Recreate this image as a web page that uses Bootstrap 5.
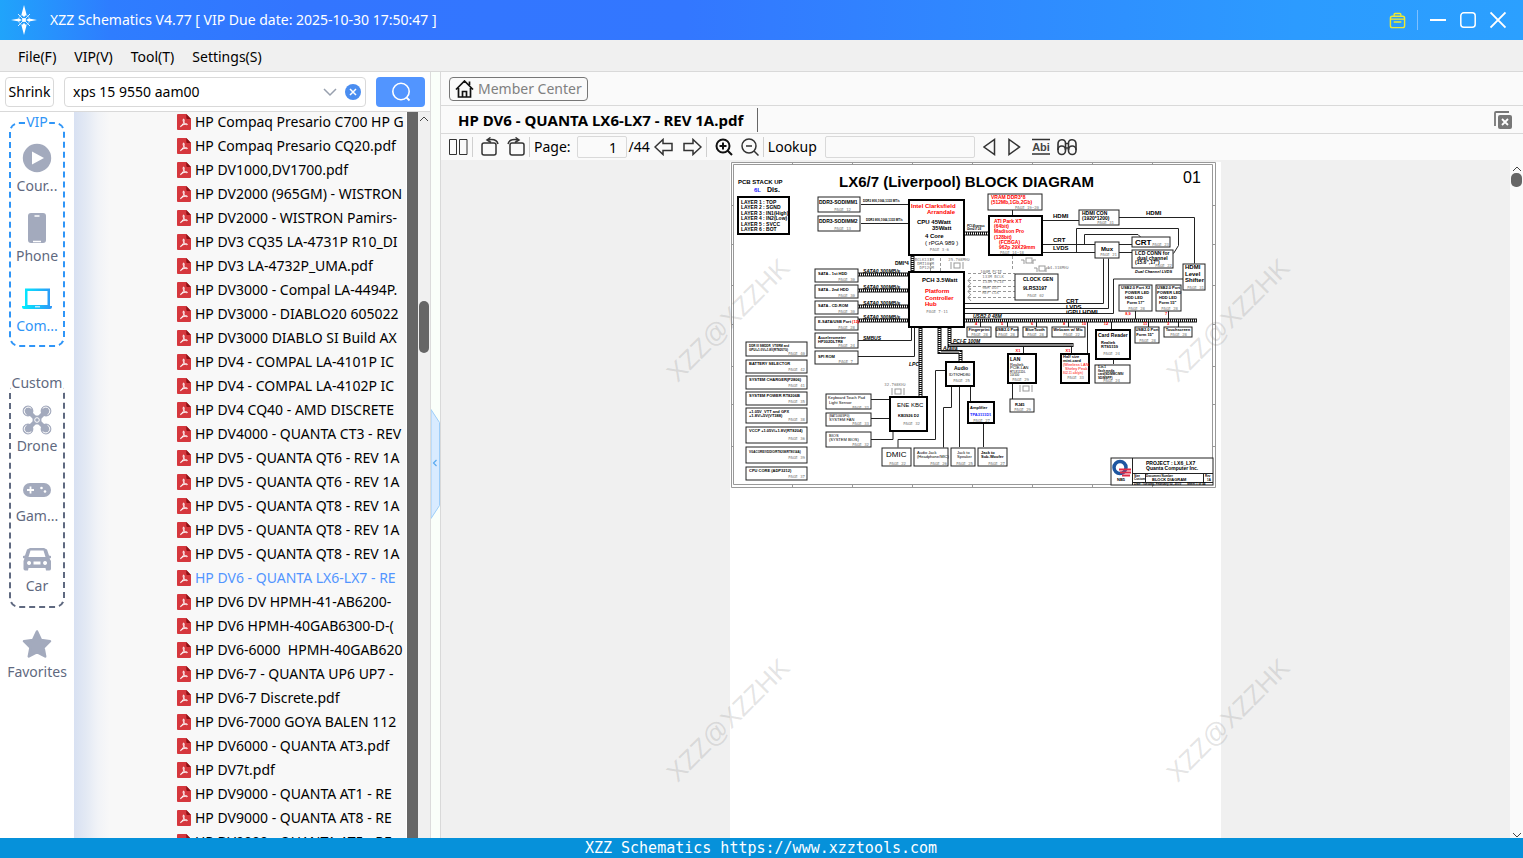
<!DOCTYPE html>
<html lang="en">
<head>
<meta charset="utf-8">
<meta name="viewport" content="width=device-width, initial-scale=1">
<title>XZZ Schematics V4.77</title>
<link href="https://cdn.jsdelivr.net/npm/bootstrap@5.3.0/dist/css/bootstrap.min.css" rel="stylesheet">
<script src="https://cdn.jsdelivr.net/npm/bootstrap@5.3.0/dist/js/bootstrap.bundle.min.js" defer></script>
<style>
  body { font-family: "Noto Sans", "Noto Sans CJK SC", sans-serif; font-size: 14px; line-height: 20px; color: #000; background: #fafafa; }
  button, input { font-family: inherit; font-size: inherit; line-height: inherit; color: inherit; }
  svg { display: block; flex: none; }
  .bare { border: 0; padding: 0; background: none; }
  .title-bar { height: 40px; color: #fff; background: linear-gradient(90deg, #20a4fb 0, #2e7dff 110px, #3375ff 300px, #3377ff 45%, #2c9bff 85%, #2ba0ff 100%); padding: 0 17px 0 10px; }
  .title-sep { width: 1px; height: 20px; background: #7fc0ff; margin: 0 12px 0 11px; }
  .win-set { gap: 14px; }
  .menu-bar { height: 32px; background: #f0f0f0; border-bottom: 1px solid #d9d9d9; padding: 2px 0 0 18px; gap: 18px; }
  .menu-bar a { color: #000; text-decoration: none; }
  .left-pane { width: 431px; border-right: 1px solid #dcdcdc; background: #fff; }
  .search-row { height: 40px; border-bottom: 1px solid #d9d9d9; padding: 1px 5px 0; background: #fff; }
  .field { border: 1px solid #d9d9d9; border-radius: 4px; background: #fff; height: 30px; }
  .shrink-btn { width: 49px; padding: 0; }
  .search-box { width: 302px; margin-left: 10px; margin-right: 10px; padding: 0 4px 0 8px; }
  .search-box input, .tool-bar input { outline: 0; min-width: 0; }
  .go-btn { width: 49px; height: 30px; background: #5295ff; border-radius: 4px; }
  .side-nav { width: 74px; background: #fff; padding: 10px 9px 0; color: #5f6980; }
  .group-box { position: relative; border: 2px dashed #5f6980; border-radius: 10px; height: 225px; }
  .group-box.vip { border-color: #2f95f7; margin-bottom: 36px; }
  .group-name { position: absolute; top: -12px; left: 50%; transform: translateX(-50%); background: #fff; padding: 0 1px; }
  .vip .group-name { color: #2f95f7; }
  .side-item { display: flex; flex-direction: column; align-items: center; height: 70px; width: 100%; padding-top: 19px; color: #5f6980; text-decoration: none; white-space: nowrap; }
  .side-item svg { width: 32px; height: 32px; }
  .vip .side-item { padding-top: 18px; gap: 2px; }
  .side-item.on { color: #2f95f7; }
  .fav-item { padding-top: 20px; height: 76px; gap: 2px; }
  .tree { min-width: 0; background: linear-gradient(90deg, #d8e1f2 0, #e3e9f4 12px, #f1f3f7 24px, #f8f8f8 36px); padding-left: 103px; }
  .tree ul { margin: -2px 0 0; }
  .tree li { height: 24px; }
  .tree a { display: flex; align-items: center; gap: 4px; height: 24px; color: #000; text-decoration: none; white-space: pre; }
  .tree a.on { color: #5295ff; }
  .dark-rail { width: 11px; background: #666; margin-left: 1px; }
  .track { width: 12px; background: #f0f0f0; position: relative; }
  .thumb { position: absolute; left: 1px; top: 189px; width: 10px; height: 52px; border-radius: 5px; background: #666; }
  .splitter { width: 10px; background: #fafffa; border-right: 1px solid #d9d9d9; padding-top: 18px; }
  .bar-row { border-bottom: 1px solid #d9d9d9; background: #fafafa; }
  .member-row { height: 34px; padding-left: 8px; }
  .member-btn { height: 24px; border: 1px solid #777; border-radius: 4px; background: #fafafa; color: #808080; padding: 0 5px; gap: 4px; }
  .tab-row { height: 28px; padding: 0 11px 0 17px; }
  .doc-tab { font-size: 15px; font-weight: 700; color: #000; text-decoration: none; border-right: 1px solid #666; height: 24px; line-height: 24px; padding-right: 14px; }
  .tool-bar { height: 26px; padding-left: 8px; background: #fafafa; }
  .tool-bar .field { height: 22px; background: #fafafa; border-radius: 2px; padding: 0 6px; }
  .tool-bar .page-no { width: 50px; text-align: right; margin: 0 2px 0 6px; padding-right: 5px; }
  .lookup { width: 150px; margin: 0 8px; }
  .find-set { gap: 12px; }
  .extra-set { gap: 6px; margin-left: 10px; }
  .bar-sep { width: 1px; height: 20px; background: #d0d0d0; }
  .viewer { background: #f0f0f0; min-width: 0; padding-top: 2px; }
  .sheet { width: 491px; background: #fff; }
  .wmark { position: absolute; font: 26px/30px "Liberation Sans", Arial, sans-serif; color: rgba(120,120,120,.2); transform: translate(-50%,-50%) rotate(-45deg); pointer-events: none; }
  .view-track { width: 13px; background: #fafafa; padding-top: 6px; }
  .view-thumb { width: 11px; height: 14px; border-radius: 5px; background: #666; margin-top: 1px; }
  .status { height: 20px; background: #0691da; color: #fff; font: 15px/20px "DejaVu Sans Mono", "Liberation Mono", monospace; padding-right: 1px; }

  /* block diagram */
  .dia { font-family: "Liberation Sans", Arial, sans-serif; font-size: 5px; }
  .dia rect { fill: #fff; stroke: #222; stroke-width: 1; }
  .dia .hv { stroke: #000; stroke-width: 2; }
  .dia .ln { fill: none; stroke: #222; stroke-width: 1; }
  .dia .lt { fill: none; stroke: #999; stroke-width: 1; }
  .dia .ds { stroke-dasharray: 3 2; }
  .dia .bus { fill: none; stroke: #111; stroke-width: 4; }
  .dia .hat { fill: none; stroke: #fff; stroke-width: 2; stroke-dasharray: 1 1; }
  .dia .b { font-weight: 700; }
  .dia .r { fill: #f00; }
  .dia .u { fill: #22f; }
  .dia .s4 { font-size: 4px; }
  .dia .s6 { font-size: 6px; }
  .dia .s7 { font-size: 7px; }
  .dia .s8 { font-size: 8px; }
  .dia .s3 { font-size: 3px; }
  .dia .it { font-style: italic; }
  .dia .pg { font: 4px "DejaVu Sans Mono", monospace; fill: #777; text-anchor: end; }
  .dia .mid { text-anchor: middle; }
</style>
</head>
<body>
<svg width="0" height="0" class="position-absolute" aria-hidden="true">
  <symbol id="pdf" viewBox="0 0 15 16" preserveAspectRatio="none"><path d="M1 0h9l5 5v10a1 1 0 0 1-1 1H1a1 1 0 0 1-1-1V1a1 1 0 0 1 1-1z" fill="#d5373d"/><path d="M10 0l5 5h-4a1 1 0 0 1-1-1z" fill="#8e1217"/><path d="M7 5c1 0 .8 2 .3 3.600L4.500 12.500c-1 .6-1-.5.2-1.200L10 9.800c1.500 0 1.500 1 .3.900C8.500 10.300 6.500 8 6.500 6z" fill="none" stroke="#fff" stroke-width="1"/></symbol>
  <symbol id="up" viewBox="0 0 10 6"><path d="M1 5l4-4 4 4" fill="none" stroke="#444" stroke-width="1"/></symbol>
  <symbol id="down" viewBox="0 0 10 6"><path d="M1 1l4 4 4-4" fill="none" stroke="#444" stroke-width="1"/></symbol>
</svg>
<div class="d-flex flex-column vh-100 overflow-hidden">

  <header class="title-bar d-flex align-items-center flex-shrink-0">
    <svg width="28" height="30" viewBox="0 0 28 30"><circle cx="14" cy="15" r="5.500" fill="none" stroke="#9bd5ff"/><path d="M14 0l2.500 9.500L14 12l-2.500-2.500zM14 30l2.500-9.500L14 18l-2.500 2.500zM1 15l8-1.500 3 1.500-3 1.500zM27 15l-8-1.500-3 1.500 3 1.500z" fill="#fff"/><path d="M8 9l5 5M20 9l-5 5M8 21l5-5M20 21l-5-5" stroke="#d5edff"/><circle cx="14" cy="15" r="2" fill="#fff"/></svg>
    <span class="ms-2 ps-1 me-auto">XZZ Schematics V4.77 [ VIP Due date: 2025-10-30 17:50:47 ]</span>
    <button class="bare" aria-label="Toolbox"><svg width="17" height="17" viewBox="0 0 18 18" fill="none" stroke="#f2ea2e" stroke-width="1.500"><rect x="1.500" y="4.500" width="15" height="12" rx="2"/><path d="M5.500 4V2.500a1 1 0 0 1 1-1h5a1 1 0 0 1 1 1V4M2 7.500h14M5 10.500h8"/></svg></button>
    <span class="title-sep"></span>
    <span class="d-flex win-set">
      <button class="bare" aria-label="Minimize"><svg width="16" height="18" viewBox="0 0 16 18"><path d="M0 9h16" stroke="#fff" stroke-width="2"/></svg></button>
      <button class="bare" aria-label="Maximize"><svg width="16" height="18" viewBox="0 0 16 18"><rect x=".8" y="1.800" width="14.400" height="14.400" rx="3" fill="none" stroke="#fff" stroke-width="1.500"/></svg></button>
      <button class="bare" aria-label="Close"><svg width="16" height="18" viewBox="0 0 16 18"><path d="M.5 1.500l15 15M15.500 1.500l-15 15" stroke="#fff" stroke-width="1.800"/></svg></button>
    </span>
  </header>

  <nav class="menu-bar d-flex align-items-center flex-shrink-0">
    <a href="#">File(F)</a><a href="#">VIP(V)</a><a href="#">Tool(T)</a><a href="#">Settings(S)</a>
  </nav>

  <main class="d-flex flex-grow-1 overflow-hidden">
    <section class="left-pane d-flex flex-column flex-shrink-0">
      <div class="search-row d-flex align-items-center flex-shrink-0">
        <button class="field shrink-btn">Shrink</button>
        <div class="field search-box d-flex align-items-center">
          <input class="bare flex-grow-1" aria-label="Search" value="xps 15 9550 aam00">
          <svg width="14" height="10" viewBox="0 0 14 10" class="me-2"><path d="M1 2l6 6 6-6" fill="none" stroke="#98a0ae" stroke-width="1.500"/></svg>
          <button class="bare" aria-label="Clear"><svg width="16" height="16" viewBox="0 0 16 16"><circle cx="8" cy="8" r="8" fill="#4a8df0"/><path d="M5 5l6 6M11 5l-6 6" stroke="#fff" stroke-width="1.500"/></svg></button>
        </div>
        <button class="bare go-btn d-flex align-items-center justify-content-center" aria-label="Find"><svg width="20" height="20" viewBox="0 0 20 20"><circle cx="10" cy="9.500" r="8.200" fill="none" stroke="#fff" stroke-width="1.600"/><path d="M15.500 15.500l3 3" stroke="#fff" stroke-width="1.800"/></svg></button>
      </div>

      <div class="d-flex flex-grow-1 overflow-hidden">
        <nav class="side-nav flex-shrink-0">
          <div class="group-box vip"><span class="group-name">VIP</span>
            <a class="side-item" href="#"><svg viewBox="0 0 32 32"><circle cx="16" cy="16" r="14.200" fill="#a3aabd"/><path d="M11 9.500l12 6.500-12 6.500z" fill="#fff"/></svg>Cour...</a>
            <a class="side-item" href="#"><svg viewBox="0 0 32 32"><rect x="7" y="1" width="18" height="30" rx="3" fill="#a3aabd"/><path d="M13.500 4h5M12 29.500h8" stroke="#fff" stroke-width="1.500"/></svg>Phone</a>
            <a class="side-item on" href="#"><svg viewBox="0 0 32 32"><defs><linearGradient id="lg"><stop stop-color="#00f0ff"/><stop offset="1" stop-color="#2f95f7"/></linearGradient></defs><path fill-rule="evenodd" fill="url(#lg)" d="M4 6.500h25V24h2v1a2 2 0 0 1-2 2H3a2 2 0 0 1-2-2v-1h3zM6.500 9v14h20V9z"/><path d="M14 24.800h5" stroke="#fff"/></svg>Com...</a>
          </div>
          <div class="group-box"><span class="group-name">Custom</span>
            <a class="side-item" href="#"><svg viewBox="0 0 32 32"><g fill="#a3aabd"><circle cx="7" cy="7" r="5"/><circle cx="25" cy="7" r="5"/><circle cx="7" cy="25" r="5"/><circle cx="25" cy="25" r="5"/></g><path d="M7 7l18 18M25 7L7 25" stroke="#a3aabd" stroke-width="4.500"/><g fill="none" stroke="#a3aabd" stroke-width="1.200"><circle cx="7" cy="7" r="4.800"/><circle cx="25" cy="7" r="4.800"/><circle cx="7" cy="25" r="4.800"/><circle cx="25" cy="25" r="4.800"/></g><g fill="none" stroke="#fff" stroke-width="1"><path d="M10.300 4.500a4 4 0 1 0-4.800 6.200M21.700 4.500a4 4 0 1 1 4.800 6.200M10.300 27.500a4 4 0 1 1-4.800-6.200M21.700 27.500a4 4 0 1 0 4.800-6.200"/></g><circle cx="16" cy="16" r="4.500" fill="#a3aabd"/><circle cx="16" cy="16" r="2.300" fill="none" stroke="#fff"/></svg>Drone</a>
            <a class="side-item" href="#"><svg viewBox="0 0 32 32"><rect x="2" y="9" width="28" height="14" rx="7" fill="#a3aabd"/><path d="M6 16h7M9.500 12.500v7" stroke="#fff" stroke-width="1.800"/><circle cx="20.500" cy="14" r="1.300" fill="#fff"/><circle cx="24" cy="17.500" r="1.300" fill="#fff"/></svg>Gam...</a>
            <a class="side-item" href="#"><svg viewBox="0 0 32 32"><path fill-rule="evenodd" fill="#a3aabd" d="M9 4h14l3 1.500 2 6 2 .5v2l-1.500.5L30 17v8a2 2 0 0 1-2 1.500h-3L24.500 24h-17L7 26.500H4A2 2 0 0 1 2.500 25v-8l1-2.500L2 14v-2l2-.5 2-6zM9.500 6.500L7.500 13h17l-2-6.500zM8 17a2 2 0 1 0 .1 0zM24 17a2 2 0 1 0 .1 0zM12.500 17.500v3h7v-3z"/></svg>Car</a>
          </div>
          <a class="side-item fav-item" href="#"><svg viewBox="0 0 32 32"><path d="M16 3.500l4 8.500 9 1.200-6.500 6.300 1.700 9L16 24.200 7.800 28.500l1.700-9L3 13.200 12 12z" fill="#a3aabd" stroke="#a3aabd" stroke-width="2.500" stroke-linejoin="round"/></svg>Favorites</a>
        </nav>

        <div class="tree flex-grow-1 overflow-hidden">
          <ul class="list-unstyled">
            <li><a href="#"><svg width="14" height="16"><use href="#pdf"/></svg>HP Compaq Presario C700 HP G</a></li>
            <li><a href="#"><svg width="14" height="16"><use href="#pdf"/></svg>HP Compaq Presario CQ20.pdf</a></li>
            <li><a href="#"><svg width="14" height="16"><use href="#pdf"/></svg>HP DV1000,DV1700.pdf</a></li>
            <li><a href="#"><svg width="14" height="16"><use href="#pdf"/></svg>HP DV2000 (965GM) - WISTRON</a></li>
            <li><a href="#"><svg width="14" height="16"><use href="#pdf"/></svg>HP DV2000 - WISTRON Pamirs-</a></li>
            <li><a href="#"><svg width="14" height="16"><use href="#pdf"/></svg>HP DV3 CQ35 LA-4731P R10_DI</a></li>
            <li><a href="#"><svg width="14" height="16"><use href="#pdf"/></svg>HP DV3 LA-4732P_UMA.pdf</a></li>
            <li><a href="#"><svg width="14" height="16"><use href="#pdf"/></svg>HP DV3000 - Compal LA-4494P.</a></li>
            <li><a href="#"><svg width="14" height="16"><use href="#pdf"/></svg>HP DV3000 - DIABLO20 605022</a></li>
            <li><a href="#"><svg width="14" height="16"><use href="#pdf"/></svg>HP DV3000 DIABLO SI Build AX</a></li>
            <li><a href="#"><svg width="14" height="16"><use href="#pdf"/></svg>HP DV4 - COMPAL LA-4101P IC</a></li>
            <li><a href="#"><svg width="14" height="16"><use href="#pdf"/></svg>HP DV4 - COMPAL LA-4102P IC</a></li>
            <li><a href="#"><svg width="14" height="16"><use href="#pdf"/></svg>HP DV4 CQ40 - AMD DISCRETE</a></li>
            <li><a href="#"><svg width="14" height="16"><use href="#pdf"/></svg>HP DV4000 - QUANTA CT3 - REV</a></li>
            <li><a href="#"><svg width="14" height="16"><use href="#pdf"/></svg>HP DV5 - QUANTA QT6 - REV 1A</a></li>
            <li><a href="#"><svg width="14" height="16"><use href="#pdf"/></svg>HP DV5 - QUANTA QT6 - REV 1A</a></li>
            <li><a href="#"><svg width="14" height="16"><use href="#pdf"/></svg>HP DV5 - QUANTA QT8 - REV 1A</a></li>
            <li><a href="#"><svg width="14" height="16"><use href="#pdf"/></svg>HP DV5 - QUANTA QT8 - REV 1A</a></li>
            <li><a href="#"><svg width="14" height="16"><use href="#pdf"/></svg>HP DV5 - QUANTA QT8 - REV 1A</a></li>
            <li><a href="#" class="on"><svg width="14" height="16"><use href="#pdf"/></svg>HP DV6 - QUANTA LX6-LX7 - RE</a></li>
            <li><a href="#"><svg width="14" height="16"><use href="#pdf"/></svg>HP DV6 DV HPMH-41-AB6200-</a></li>
            <li><a href="#"><svg width="14" height="16"><use href="#pdf"/></svg>HP DV6 HPMH-40GAB6300-D-(</a></li>
            <li><a href="#"><svg width="14" height="16"><use href="#pdf"/></svg>HP DV6-6000  HPMH-40GAB620</a></li>
            <li><a href="#"><svg width="14" height="16"><use href="#pdf"/></svg>HP DV6-7 - QUANTA UP6 UP7 -</a></li>
            <li><a href="#"><svg width="14" height="16"><use href="#pdf"/></svg>HP DV6-7 Discrete.pdf</a></li>
            <li><a href="#"><svg width="14" height="16"><use href="#pdf"/></svg>HP DV6-7000 GOYA BALEN 112</a></li>
            <li><a href="#"><svg width="14" height="16"><use href="#pdf"/></svg>HP DV6000 - QUANTA AT3.pdf</a></li>
            <li><a href="#"><svg width="14" height="16"><use href="#pdf"/></svg>HP DV7t.pdf</a></li>
            <li><a href="#"><svg width="14" height="16"><use href="#pdf"/></svg>HP DV9000 - QUANTA AT1 - RE</a></li>
            <li><a href="#"><svg width="14" height="16"><use href="#pdf"/></svg>HP DV9000 - QUANTA AT8 - RE</a></li>
            <li><a href="#"><svg width="14" height="16"><use href="#pdf"/></svg>HP DV9000 - QUANTA AT5 - RE</a></li>
          </ul>
        </div>
        <div class="dark-rail flex-shrink-0"></div>
        <div class="track flex-shrink-0"><svg width="10" height="6" class="mx-auto mt-1"><use href="#up"/></svg><div class="thumb"></div></div>
      </div>
    </section>

    <div class="splitter d-flex align-items-center flex-shrink-0">
      <button class="bare" aria-label="Collapse panel"><svg width="9" height="110" viewBox="0 0 9 110"><path d="M0 .5l8.500 13v83L0 109.500z" fill="#d9ebff" stroke="#9dcdf8"/><path d="M5.500 51l-3 3 3 3" fill="none" stroke="#5aaaf0" stroke-width="1.200"/></svg></button>
    </div>

    <section class="d-flex flex-column flex-grow-1 overflow-hidden">
      <div class="bar-row member-row d-flex align-items-center flex-shrink-0">
        <button class="member-btn d-flex align-items-center"><svg width="19" height="18" viewBox="0 0 19 18" fill="none" stroke="#111" stroke-width="1.700"><path d="M1 9.500L9.500 1 18 9.500M3.500 8v9h12V8M7.500 17v-5.500h4V17M14.500 1.500V5"/></svg>Member Center</button>
      </div>
      <div class="bar-row tab-row d-flex align-items-center flex-shrink-0">
        <a class="doc-tab me-auto" href="#">HP DV6 - QUANTA LX6-LX7 - REV 1A.pdf</a>
        <button class="bare" aria-label="Close all"><svg width="18" height="18" viewBox="0 0 18 18"><path d="M1 15V2a1 1 0 0 1 1-1h13" fill="none" stroke="#777" stroke-width="1.800"/><rect x="4" y="4" width="14" height="14" rx="2" fill="#777"/><path d="M8 8l6 6M14 8l-6 6" stroke="#fff" stroke-width="1.800"/></svg></button>
      </div>
      <div class="tool-bar d-flex align-items-center flex-shrink-0">
        <button class="bare" aria-label="Two pages"><svg width="19" height="18" viewBox="0 0 19 18" fill="none" stroke="#333"><path d="M.5 1.500h7v15h-7zM10.500 1.500h7.500v15h-7.500z"/></svg></button>
        <span class="bar-sep ms-1 me-2"></span>
        <button class="bare" aria-label="Rotate left"><svg width="18" height="20" viewBox="0 0 18 20" fill="none" stroke="#333" stroke-width="1.500"><rect x="1" y="6" width="14" height="12" rx="2"/><path d="M17 7C16 3 12 2 7 3M9.500 .5L6 3l4 2.500"/></svg></button>
        <button class="bare ms-2" aria-label="Rotate right"><svg width="18" height="20" viewBox="0 0 18 20" fill="none" stroke="#333" stroke-width="1.500"><rect x="3" y="6" width="14" height="12" rx="2"/><path d="M1 7c1-4 5-5 10-4M8.500 .5L12 3 8 5.500"/></svg></button>
        <span class="bar-sep mx-1"></span>
        <label for="pageNo">Page:</label>
        <input id="pageNo" class="field page-no" value="1 "><span>/44</span>
        <button class="bare ms-1" aria-label="Previous page"><svg width="20" height="18" viewBox="0 0 20 18" fill="none" stroke="#333" stroke-width="1.500"><path d="M1 9l8-7.500V5.500h9v7H9v4z"/></svg></button>
        <button class="bare ms-2" aria-label="Next page"><svg width="20" height="18" viewBox="0 0 20 18" fill="none" stroke="#333" stroke-width="1.500"><path d="M19 9l-8-7.500V5.500H2v7h9v4z"/></svg></button>
        <span class="bar-sep ms-1 me-2"></span>
        <button class="bare" aria-label="Zoom in"><svg width="18" height="18" viewBox="0 0 18 18" fill="none" stroke="#111" stroke-width="2"><circle cx="8" cy="8" r="6.500"/><path d="M12.500 12.500l4.500 4.500M4.500 8h7M8 4.500v7"/></svg></button>
        <button class="bare ms-2" aria-label="Zoom out"><svg width="18" height="18" viewBox="0 0 18 18" fill="none" stroke="#333" stroke-width="1.500"><circle cx="8" cy="8" r="7"/><path d="M13 13l4.500 4.500M5 8h6"/></svg></button>
        <span class="bar-sep mx-1"></span>
        <label for="lookup">Lookup</label>
        <input id="lookup" class="field lookup">
        <span class="d-flex find-set">
          <button class="bare" aria-label="Find previous"><svg width="13" height="18" viewBox="0 0 13 18"><path d="M11.500 1.500v15L1 9z" fill="none" stroke="#333" stroke-width="1.500"/></svg></button>
          <button class="bare" aria-label="Find next"><svg width="13" height="18" viewBox="0 0 13 18"><path d="M1 1.500v15L11.500 9z" fill="none" stroke="#333" stroke-width="1.500"/></svg></button>
        </span>
        <span class="d-flex extra-set">
          <button class="bare" aria-label="Whole word"><svg width="20" height="18" viewBox="0 0 20 18"><path d="M1 1.500h18M1 16h18" stroke="#333" stroke-width="1.300"/><text x="10" y="13" text-anchor="middle" font-family="Liberation Sans" font-size="11" font-weight="700" fill="#444">Abi</text></svg></button>
          <button class="bare" aria-label="Binoculars"><svg width="20" height="18" viewBox="0 0 20 18" fill="none" stroke="#333" stroke-width="1.600"><rect x="1" y="8" width="7.500" height="8.500" rx="3.700"/><rect x="11.500" y="8" width="7.500" height="8.500" rx="3.700"/><path d="M1 12V6c0-5 7.500-6 7.500-1v7M19 12V6c0-5-7.500-6-7.500-1v7M8.500 5.500h3M8.500 10h3"/></svg></button>
        </span>
      </div>

      <div class="d-flex flex-grow-1 overflow-hidden">
        <div class="viewer position-relative flex-grow-1 overflow-hidden d-flex justify-content-center">
          <div class="sheet">
          <svg class="dia" width="490" height="328" viewBox="730 162 490 328" role="img" aria-label="Block diagram">
            <path class="lt" d="M731.500 162.500H1215.500V487.500H731.500z"/><path class="lt" d="M733.500 164.500H1212.500V484.500H733.500z"/>
            <path class="lt" d="M792.500 162v3M852.500 162v3M912.500 162v3M972.500 162v3M1032.500 162v3M1092.500 162v3M1152.500 162v3M792.500 485v3M852.500 485v3M912.500 485v3M972.500 485v3M1032.500 485v3M1092.500 485v3M1152.500 485v3M731 205.500h3M731 244.500h3M731 285.500h3M731 324.500h3M731 366.500h3M731 404.500h3M731 446.500h3M1213 205.500h3M1213 244.500h3M1213 285.500h3M1213 324.500h3M1213 366.500h3M1213 404.500h3M1213 446.500h3"/>
            <text class="b" x="839" y="186.500" font-size="15">LX6/7 (Liverpool) BLOCK DIAGRAM</text>
            <text x="1183" y="182.500" font-size="16">01</text>
            <text class="b s6" x="738" y="184">PCB STACK UP</text><text class="b s6 u" x="754" y="192">6L</text><text class="b s7" x="767" y="192">Dis.</text>
            <rect class="hv" x="738" y="197" width="51" height="37"/>
            <g class="b"><text x="741" y="204">LAYER 1 : TOP</text><text x="741" y="209">LAYER 2 : SGND</text><text x="741" y="214.500">LAYER 3 : IN1(High)</text><text x="741" y="220">LAYER 4 : IN2(Low)</text><text x="741" y="225.500">LAYER 5 : SVCC</text><text x="741" y="231">LAYER 6 : BOT</text></g>

            <!-- wiring -->
            <path class="ln" d="M861 204.500h48M861 223.500h48M1012.500 209v6M1042 220.500h37M1119 217.500h75.500v46M1042 244.500h53M1042 252.500h53M1119 244.500h13M1119 252.500h13M1076.500 252v-23.500h102v17l-5 8M1084.500 244v-9.500h53.500l3 3M965 303.500h138.500v-45M965 308.500h143.500v-50M965 313.500h148.500v-34.500h70M858 340.500h53.500v-13M858 356.500h56.500v-29M871 399.500h18M871 418.500h18M871 439.500h22v-8M946 370.500h-10.500v69h-37.500v8M951.500 386v21.500h-8v40M959.500 386v61M970.500 386v15M983.500 423v24M1087.500 322v31M1111.500 322v8M1113.500 359v5M1012.500 383v16M1023.500 344v10M1071.500 344v9M980.500 322v5M1007.500 322v5M1036.500 322v5M1068.500 322v5M1148.500 322v5M1178.500 322v5M1135.500 311v8M1168.500 311v8"/>
            <path class="bus" d="M965 320.500h232M858 274.500h51M858 290.500h51M858 306.500h51M858 320.500h51M965 233.500h23M912.500 255v16M920.500 327v69M939.500 327v25h21v9M949.500 327v18h124"/>
            <path class="hat" d="M965 320.500h232M858 274.500h51M858 290.500h51M858 306.500h51M858 320.500h51M965 233.500h23M912.500 255v16M920.500 327v69M939.500 327v25h21v9M949.500 327v18h124"/>
            <path class="lt ds" d="M968 273.500h47M968 280.500h47M968 286.500h47M968 291.500h47M968 297.500h47M930.500 271v-14M940.500 271v-14M1012.500 256v14"/>
            <path class="lt" d="M971 277l-3 3.500 3 3.500M971 283l-3 3.500 3 3.500M971 288l-3 3.500 3 3.500M971 294l-3 3.500 3 3.500"/>
            <g class="lt"><rect class="lt" x="954" y="263" width="6" height="5"/><path d="M951 262v7M963 262v7"/><rect class="lt" x="1026" y="258" width="6" height="5"/><path d="M1021 260h3v4M1036 260h-3v4"/><rect class="lt" x="1039" y="266" width="6" height="5"/><path d="M1034 268h3v4M1050 268h-4v4"/><rect class="lt" x="895" y="389" width="6" height="5"/><path d="M892 388v7M904 388v7"/><rect class="lt" x="1023" y="386" width="6" height="5"/><path d="M1020 385v7M1032 385v7"/></g>

            <rect x="818" y="197" width="42" height="15"/><text class="b" x="819" y="204">DDR3-SODIMM1</text><text class="pg" x="851" y="211">PAGE 12</text>
            <rect x="818" y="216" width="42" height="15"/><text class="b" x="819" y="223">DDR3-SODIMM2</text><text class="pg" x="851" y="230">PAGE 13</text>
            <text class="b s3" x="863" y="202">DDR3 800,1066,1333 MT/s</text><text class="b s3" x="866" y="221">DDR3 800,1066,1333 MT/s</text>
            <rect class="hv" x="909" y="200" width="55" height="55"/>
            <text class="b r s6" x="911" y="208">Intel Clarksfield</text><text class="b r s6" x="927" y="213.500">Arrandale</text><text class="b s6" x="917" y="224">CPU 45Watt</text><text class="b s6" x="932" y="229.500">35Watt</text><text class="b s6" x="925" y="237.500">4 Core</text><text class="s6" x="925" y="244.500">( rPGA 989 )</text><text class="pg" x="949" y="251">PAGE 3-6</text>
            <rect class="hv" x="909" y="272" width="55" height="55"/>
            <text class="b s6" x="922" y="282">PCH 3.5Watt</text><text class="b r s6" x="925" y="293">Platform</text><text class="b r s6" x="925" y="299.500">Controller</text><text class="b r s6" x="925" y="306">Hub</text><text class="pg" x="948" y="312.500">PAGE 7-11</text>
            <text class="b" x="895" y="265">DMI*4</text><text class="pg" x="934" y="261">BCLK133M</text><text class="pg" x="934" y="265">DMI100M</text><text class="pg" x="934" y="269">DP120M</text>
            <text class="b s3 it" x="967" y="227">PCI-Express</text><text class="b s3 it" x="967" y="230">Gen2.0 16</text>

            <rect x="815" y="269" width="43" height="13"/><text class="b s4" x="818" y="275">SATA - 1st HDD</text><text class="pg" x="855" y="281">PAGE 30</text>
            <rect x="815" y="285" width="43" height="13"/><text class="b s4" x="818" y="291">SATA - 2nd HDD</text><text class="pg" x="855" y="297">PAGE 30</text>
            <rect x="815" y="301" width="43" height="13"/><text class="b s4" x="818" y="307">SATA - CD-ROM</text><text class="pg" x="855" y="313">PAGE 30</text>
            <rect x="815" y="317" width="43" height="13"/><text class="b s4" x="818" y="323">E-SATA/USB Port <tspan class="r">(12)</tspan></text><text class="pg" x="855" y="329">PAGE 28</text>
            <rect x="815" y="333" width="43" height="15"/><text class="b s4" x="818" y="339">Accelerometer</text><text class="b s4" x="818" y="343">HP302DLTR8</text><text class="pg" x="855" y="347">PAGE 24</text>
            <rect x="815" y="351" width="43" height="13"/><text class="b s4" x="818" y="357.500">SPI ROM</text><text class="pg" x="853" y="363">PAGE 7</text>
            <g class="b it"><text x="863" y="273">SATA0 300MB/s</text><text x="863" y="289">SATA0 300MB/s</text><text x="863" y="305">SATA0 300MB/s</text><text x="863" y="319">SATA0 300MB/s</text><text x="863" y="340">SMBUS</text><text x="909" y="366">LPC</text><text x="943" y="350">Azalia</text><text x="953" y="342.500">PCI-E 100M</text><text x="973" y="318">USB2.0 48M</text></g>

            <rect x="988" y="194" width="54" height="16"/><text class="b r" x="991" y="198.500">VRAM DDR3*8</text><text class="b r" x="991" y="203.500">(512Mb,1Gb,2Gb)</text><text class="pg" x="1039" y="208.500">PAGE 19~20</text>
            <rect class="hv" x="989" y="216" width="53" height="39"/><g class="b r"><text x="994" y="222.500">ATI  Park XT</text><text x="994" y="228">(64bit)</text><text x="994" y="233">Madison Pro</text><text x="994" y="238.500">(128bit)</text><text x="999" y="244">(FCBGA)</text><text x="999" y="249">962p 29X29mm</text></g><text class="pg" x="1024" y="253.500">PAGE 14~18</text>
            <g class="b s6"><text x="1053" y="218">HDMI</text><text x="1146" y="215">HDMI</text><text x="1053" y="242">CRT</text><text x="1053" y="250">LVDS</text><text x="1066" y="303">CRT</text><text x="1066" y="308.500">LVDS</text><text x="1066" y="314">iGPU HDMI</text></g>
            <rect x="1079" y="210" width="40" height="15"/><text class="b" x="1082" y="215">HDMI CON</text><text class="b" x="1082" y="220">(1920*1200)</text><text class="pg" x="1114" y="224">PAGE 31</text>
            <rect x="1095" y="242" width="24" height="16"/><text class="b s6" x="1101" y="250.500">Mux</text><text class="pg" x="1117" y="256">PAGE 21</text>
            <rect x="1132" y="237" width="38" height="10"/><text class="b s8" x="1135" y="244.500">CRT</text><text class="pg" x="1169" y="246">PAGE 23</text>
            <rect x="1132" y="250" width="41" height="18"/><text class="b" x="1135" y="254.500">LCD CONN for</text><text class="b" x="1137" y="259.500">dual channel</text><text class="b" x="1135" y="264">(15.6",17")</text><text class="pg" x="1172" y="267">PAGE 22</text><text class="b s4 it" x="1135" y="272.500">Dual Channel LVDS</text>
            <rect x="1183" y="264" width="22" height="26"/><text class="b s6" x="1185" y="269">HDMI</text><text class="b s6" x="1185" y="275.500">Level</text><text class="b s6" x="1185" y="282">Shifter</text><text class="pg" x="1204" y="289">PAGE 31</text>
            <rect x="1015" y="274" width="43" height="26"/><text class="b" x="1023" y="281">CLOCK GEN</text><text class="b" x="1023" y="290">9LRS3197</text><text class="pg" x="1044" y="297">PAGE 02</text>
            <g class="pg"><text x="1002" y="272.500">100M PCIE</text><text x="1004" y="277.500">133M BCLK</text><text x="1004" y="283">133M PCIE</text><text x="999" y="289">96M DOT</text><text x="999" y="294">REF CLK</text></g>
            <rect x="1119" y="285" width="33" height="26"/><g class="b s4"><text x="1121" y="288.500">USB2.0 Port X2</text><text x="1125" y="294">POWER LED</text><text x="1125" y="299">HDD LED</text><text x="1127" y="304">Form 17"</text></g><text class="pg" x="1145" y="309.500">PAGE 28</text>
            <rect x="1156" y="285" width="25" height="26"/><g class="b s4"><text x="1157" y="288.500">USB2.0 Port</text><text x="1157" y="294">POWER LED</text><text x="1159" y="299">HDD LED</text><text x="1159" y="304">Form 15"</text></g><text class="pg" x="1178" y="309.500">PAGE 28</text>
            <g class="r s4 mid b"><text x="1128" y="315">8,9</text><text x="1166" y="315">7</text><text x="976" y="325">4</text><text x="1002" y="325">5</text><text x="1032" y="325">6</text><text x="1064" y="325">8</text><text x="1084" y="325">10</text><text x="1106" y="325">12</text><text x="1145" y="325">11</text><text x="1168" y="325">3</text><text x="1018" y="352">X1</text><text x="1068" y="352">X1</text></g>

            <g class="b s4 mid"><rect x="967" y="327" width="24" height="10"/><text x="979" y="331">Fingerprint</text><rect x="996" y="327" width="22" height="10"/><text x="1007" y="331">USB2.0 Port</text><rect x="1023" y="327" width="24" height="10"/><text x="1035" y="331">BlueTooth</text><rect x="1052" y="327" width="33" height="10"/><text x="1068" y="331">Webcam w/ Mic</text><rect x="1135" y="327" width="24" height="16"/><text x="1147" y="331">USB2.0 Port</text><text x="1145" y="336">Form 15"</text><rect x="1164" y="327" width="28" height="10"/><text x="1178" y="331">Touchscreen</text></g>
            <g class="pg"><text x="988" y="336">PAGE 28</text><text x="1015" y="336">PAGE 28</text><text x="1044" y="336">PAGE 28</text><text x="1080" y="336">PAGE 22</text><text x="1156" y="341.500">PAGE 28</text><text x="1187" y="336">PAGE 28</text></g>
            <rect class="hv" x="1096" y="330" width="34" height="29"/><text class="b" x="1098" y="337">Card Reader</text><text class="b s4" x="1101" y="344">Realtek</text><text class="b s4" x="1101" y="348">RTS5159</text><text class="pg" x="1120" y="355">PAGE 24</text>
            <rect x="1095" y="365" width="35" height="18"/><g class="b s3"><text x="1098" y="368">5-in-1</text><text x="1098" y="371.500">flash media</text><text x="1098" y="375">card(SD/MMC/MS/</text><text x="1098" y="378.500">SD/MSPP)</text></g><text class="pg" x="1120" y="382">PAGE 24</text>
            <rect class="hv" x="1008" y="354" width="28" height="29"/><text class="b" x="1010" y="361">LAN</text><g class="s4"><text x="1010" y="365.500">Realtek</text><text x="1010" y="369">PCIE-LAN</text><text class="s3" x="1010" y="372.500">RTL8111DL</text><text class="s3" x="1010" y="376">10/100</text></g><text class="pg" x="1029" y="381">PAGE 29</text>
            <rect class="hv" x="1061" y="354" width="28" height="29"/><g class="b s4"><text x="1063" y="358">Half size</text><text x="1063" y="362">mini-card</text></g><g class="r s4"><text x="1063" y="366">(Wireless LAN</text><text x="1065" y="370">Shirley Peak</text><text class="s3" x="1063" y="374">802.11 a/b/g/n)</text></g><text class="pg" x="1084" y="379">PAGE 33</text>
            <rect x="1010" y="399" width="24" height="13"/><text class="b s4" x="1015" y="406">RJ45</text><text class="pg" x="1031" y="411">PAGE 29</text>
            <rect class="hv" x="946" y="362" width="28" height="24"/><text class="b" x="954" y="370">Audio</text><text class="s4" x="949" y="376">IDT92HD80</text><text class="pg" x="970" y="382">PAGE 25</text>
            <rect class="hv" x="968" y="402" width="26" height="21"/><text class="b s4" x="970" y="409">Amplifier</text><text class="b s4 u" x="970" y="416">TPA3111D1</text><text class="pg" x="990" y="422">PAGE 27</text>

            <g class="b s4"><rect x="746" y="342" width="61" height="14"/><text class="s3" x="749" y="346.500">DDR III SMDDR_VTERM and</text><text class="s3" x="749" y="351">GPU/+1.0V/+1.8V(RT8207G)</text><rect x="746" y="360" width="61" height="13"/><text x="749" y="365">BATTERY SELECTOR</text><rect x="746" y="376" width="61" height="13"/><text x="749" y="381">SYSTEM CHARGER(P2806)</text><rect x="746" y="392" width="61" height="13"/><text x="749" y="397">SYSTEM POWER RT8206B</text><rect x="746" y="408" width="61" height="15"/><text x="749" y="413">+1.05V_VTT and GFX</text><text x="749" y="417">+1.8V/+5V(VT388)</text><rect x="746" y="427" width="61" height="16"/><text x="749" y="432">VCCP +1.05V/+1.8V(RT8204)</text><rect x="746" y="447" width="61" height="16"/><text class="s3" x="749" y="453">VGACORE/VDDIO/RT8208/RT8014A)</text><rect x="746" y="467" width="61" height="13"/><text x="749" y="472">CPU CORE (ADP3212)</text></g>
            <g class="pg"><text x="805" y="355">PAGE 40</text><text x="805" y="371">PAGE 42</text><text x="805" y="387">PAGE 41</text><text x="805" y="403">PAGE 35</text><text x="805" y="421">PAGE 38</text><text x="805" y="440">PAGE 36</text><text x="805" y="459">PAGE 39</text><text x="805" y="478">PAGE 37</text></g>

            <rect x="826" y="394" width="45" height="15"/><text class="s4" x="828" y="399">Keyboard Touch Pad</text><text class="s4" x="829" y="404">Light Sensor</text><text class="pg" x="869" y="408.500">PAGE 32</text>
            <rect x="826" y="413" width="45" height="13"/><text class="s3" x="829" y="416.500">(BAT1066SPG)</text><text class="s4" x="829" y="420.500">SYSTEM FAN</text><text class="pg" x="869" y="425">PAGE 33</text>
            <rect x="826" y="432" width="45" height="15"/><text class="s4" x="829" y="436.500">BIOS</text><text class="s4" x="829" y="441">(SYSTEM BIOS)</text><text class="pg" x="869" y="446">PAGE 32</text>
            <rect class="hv" x="890" y="397" width="37" height="34"/><text class="s6" x="897" y="407">ENE KBC</text><text class="b s4" x="898" y="417">KB3926 D2</text><text class="pg" x="920" y="424.500">PAGE 32</text>
            <text class="pg" x="906" y="386">32.768KHz</text><text class="pg" x="970" y="261">25.768MHz</text><text class="pg" x="1069" y="269">14.318MHz</text>
            <rect x="882" y="448" width="29" height="18"/><text class="s8" x="886" y="457">DMIC</text><text class="pg" x="906" y="464.500">PAGE 22</text>
            <rect x="914" y="448" width="34" height="18"/><text class="s4" x="917" y="454">Audio Jack</text><text class="s4" x="917" y="458">(Headphone/MIC)</text><text class="pg" x="947" y="464.500">PAGE 26</text>
            <rect x="951" y="448" width="24" height="18"/><text class="s4" x="957" y="454">Jack to</text><text class="s4" x="957" y="458">Speaker</text><text class="pg" x="973" y="464.500">PAGE 25</text>
            <rect x="978" y="448" width="29" height="18"/><text class="b s4" x="981" y="454">Jack to</text><text class="b s4" x="981" y="458">Sub-Woofer</text><text class="pg" x="1005" y="464.500">PAGE 27</text>

            <rect x="1111" y="458" width="102" height="27"/><path class="ln" d="M1132.500 458v27M1132 473.500h81M1132 482.500h81M1145.500 473v9M1203.500 473v9"/>
            <circle cx="1120" cy="467.500" r="6" fill="none" stroke="#1e56a0" stroke-width="3.500"/><path d="M1119 469.500h12M1120 472.500h11M1122 475.500h8" stroke="#e02a45" stroke-width="2"/><text class="b s4" x="1117" y="481">NB5</text>
            <text class="b" x="1146" y="464.500">PROJECT : LX6_LX7</text><text class="b" x="1146" y="469.500">Quanta Computer Inc.</text>
            <g class="b s3"><text x="1134" y="476.500">Size</text><text x="1134" y="480">Custom</text><text x="1146" y="476.500">Document Number</text><text class="s4" x="1152" y="480.500">BLOCK DIAGRAM</text><text x="1205" y="476.500">Rev</text><text x="1207" y="480.500">1A</text><text x="1134" y="485">Date:  Tuesday, February 02, 2010</text><text x="1187" y="485">Sheet  1  of  44</text></g>
          </svg>
          </div>
          <span class="wmark" style="left:287px;top:160px">XZZ@XZZHK</span>
          <span class="wmark" style="left:787px;top:160px">XZZ@XZZHK</span>
          <span class="wmark" style="left:287px;top:560px">XZZ@XZZHK</span>
          <span class="wmark" style="left:787px;top:560px">XZZ@XZZHK</span>
        </div>
        <div class="view-track flex-shrink-0 d-flex flex-column align-items-center"><svg width="10" height="6"><use href="#up"/></svg><div class="view-thumb mb-auto"></div><svg width="10" height="6"><use href="#down"/></svg></div>
      </div>
    </section>
  </main>

  <footer class="status text-center flex-shrink-0">XZZ Schematics https://www.xzztools.com</footer>
</div>
</body>
</html>
